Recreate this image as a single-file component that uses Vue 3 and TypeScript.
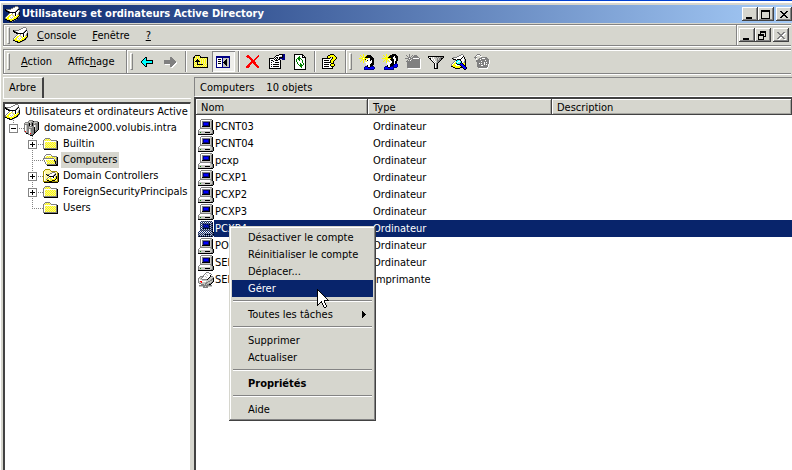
<script setup lang="ts">
import { h, ref } from 'vue'

const palette: Record<string, string> = {
  K: '#000000', W: '#ffffff', G: '#808080', L: '#c6c6c0', D: '#4a4a4a',
  Y: '#ffff00', y: '#f4ee9c', O: '#a09000', B: '#0000ff', N: '#000084',
  C: '#00ffff', R: '#ff0000', g: '#008000', c: '#84e0e8', o: '#fff7a0',
}

const icons: Record<string, string[]> = {
  computer: [
    '...GGGGGGGGGGG..', '..GWWWWWWWWWLLK.', '..GWGGGGGGGGLGK.', '..GWGNNNNNNKLGK.',
    '..GWGNBBBBNKLGK.', '..GWGNBBBBNKLGK.', '..GWGNNNNNNKLGK.', '..GWKKKKKKKKLGK.',
    '..GLLLLLLLLLLGK.', '..GGGGGGGGGGGGK.', '.GWWWWWWWWWWLGK.', 'GWWWWWWWWWWWLLGK',
    'GLLLLLLLLLLLLLGK', 'GLgLLLLKKKKKLLGK', 'GLLLLLLLLLLLLGGK', 'KKKKKKKKKKKKKKK.',
  ],
  printer: [
    '........GGG.....', '.......GWWWGG...', '......GWLWWWWG..', '.....GWWWLWWK...',
    '..GGGGWLWWWWKGG.', '.GLLGWWWLWWKLLLG', 'GLLGWWWWWWKLLLGK', 'GWLLGGGGGKLLLGGK',
    'GWWWLLLLLLLLGGLK', 'GLRRWWWWLLGGLLGK', 'GLLRLLLLGGLLLGK.', '.GGLLLLGGLLGGK..',
    '...GGGLGLGGKK...', '.GGGGGGGGGGGGG..', '.LLLLGGLGGLLLL..', '.....GGGGG......',
  ],
  directory: [
    '..........GGG...', '........GGWWWG..', '......GGWWWWWG..', 'KGGGGGWWWWWWGK..',
    'KKGWWWWWWWWGKWG.', '.KKKGWWWWWGKWWG.', '...KKKKKKKKWWLK.', '....GWWGWWKWWGK.',
    '...GWWYLWWKWLGK.', '..GWYYWLYWKWYYK.', '.GWYYWWWLYWYYKG.', 'GWYYWLWLWYYYKG..',
    'GYYYWWLWYYYKK...', 'KKYYYYYYYKKG....', '..KKKYYKKG......', '....KKKG........',
  ],
  domain: [
    '.....GGGG.......', '....GLLLGKGGGG..', '.GGGGLLGGGLLLGK.', 'GLLLGKLGKGLGGGK.',
    'GGGGGKGGKGGGGGK.', 'GWLGGKWGKGWLGGK.', 'GWLGGGGGGGWLGGK.', 'GWLGGLLLGGKLGGK.',
    'GWLGGGGGGGKLGGK.', 'GWLGGWLGGGKLGGK.', 'GWLGGWLGGGKGGK..', 'GRLGGWLGGGKGK...',
    '.GGGGWLGGGKK....', '..KKGWRGGGK.....', '....GGGGGK......', '......KKK.......',
  ],
  folder: [
    '................', '................', '..GGGGG.........', '.GyYyYyG........',
    'GyYyYyYyGGGGGG..', 'GWWWWWWWWWWWWGK.', 'GWyYyYyYyYyYyGK.', 'GWYyYyYyYyYyYGK.',
    'GWyYyYyYyYyYyGK.', 'GWYyYyYyYyYyYGK.', 'GWyYyYyYyYyYyGK.', 'GWYyYyYyYyYyYGK.',
    'GGGGGGGGGGGGGGK.', '.KKKKKKKKKKKKKK.', '................', '................',
  ],
  folderOpen: [
    '................', '................', '...GGGGG........', '..GWWWWWG.......',
    '.GWyYyYyYGGGGG..', '.GyYyYyYyYyYyGK.', 'GGGGGGGGGGGyYGK.', 'GWWWWWWWWWWGyGK.',
    '.GWYyYyYyYyKYGK.', '.GWyYyYyYyYGKGK.', '..GWyYyYyYyYKGK.', '..GWYyYyYyYyKGK.',
    '...GGGGGGGGGGKK.', '....KKKKKKKKKKK.', '................', '................',
  ],
  folderUnit: [
    '................', '..OOOOO.........', '.OoooooO........', 'OoooooooOOOOOO..',
    'OWoooooooGGGooO.', 'OWoooooGGWWWGoOK', 'OWoKGGGWWWWGKoOK', 'OWooKKWWWWGKLoOK',
    'OWooooKKKKKWLKOK', 'OWoooGWYWWKWYKOK', 'OWooGWYYLWWYYKOK', 'OWoGYYWLYYYYKoOK',
    'OWooKKYYYKKKooOK', 'OOOOOOKKKOOOOOOK', '.KKKKKKKKKKKKKK.', '................',
  ],
  back: [
    '................', '................', '................', '.....KK.........',
    '....KCK.........', '...KCCK.........', '..KCCCKKKKKKK...', '.KCCCCCCCCCCK...',
    '.KCCCCCCCCCCK...', '..KCCCKKKKKKK...', '...KCCK.........', '....KCK.........',
    '.....KK.........', '................', '................', '................',
  ],
  forward: [
    '................', '................', '................', '.......GG.......',
    '.......GGG......', '.......GGGG.....', '.GGGGGGGGGGG....', '.GGGGGGGGGGGG...',
    '.GGGGGGGGGGGGW..', '.GGGGGGGGGGGWW..', '..WWWWWGGGGWW...', '.......GGGWW....',
    '.......GGWW.....', '........WW......', '................', '................',
  ],
  up: [
    '................', '..KKKKK.........', '.KyYyYyK........', 'KKyYyYyKKKKKKKK.',
    'KYyYyYyYyYyYyYK.', 'KyYyKyYyYyYyYyK.', 'KYyKKKYyYyYyYyK.', 'KyKKKKKyYyYyYyK.',
    'KYyYKyYyYyYyYyK.', 'KyYyKyYyYyYyYyK.', 'KYyYKKKKKKyYyYK.', 'KyYyYyYyYyYyYyK.',
    'KYyYyYyYyYyYyYK.', 'KKKKKKKKKKKKKKK.', '................', '................',
  ],
  panes: [
    '................', '................', 'NNNNNNNNNNNNNN..', 'NNNNNNNNNNNNNN..',
    'NWWWWWNLLLLLLN..', 'NWKKKWNLLLKLLN..', 'NWWWWWNLLKKLLN..', 'NWKKKWNLKKKLLN..',
    'NWWWWWNKKKKLLN..', 'NWKKKWNLKKKLLN..', 'NWWWWWNLLKKLLN..', 'NWWWWWNLLLKLLN..',
    'NWWWWWNLLLLLLN..', 'NNNNNNNNNNNNNN..', '................', '................',
  ],
  remove: [
    '................', '.RR.........R...', 'RRRR.......RR...', '.RRRR.....RR....',
    '...RRR...RR.....', '....RRR.RR......', '.....RRRR.......', '.....RRRR.......',
    '....RRRRRR......', '...RRR.RRR......', '..RRR...RRR.....', '.RRR.....RRR....',
    'RRRR......RRR...', 'RRR........RR...', '................', '................',
  ],
  properties: [
    '..........KKKKNN', '.......KKKWWWKNN', '......KWWWWLLKNN', '.....KWKKWKKKKNN',
    'KKKKKWKWKWKNNNNN', 'KWWWWKWKWKK..NNN', 'KWKKWWKKKWWK....', 'KWWWKWWWWWWK....',
    'KWKWWWKKKKWK....', 'KWWWWWWWWWWK....', 'KWKWKKKKKKWK....', 'KWWWWWWWWWWK....',
    'KWKWKKKKKKWK....', 'KWWWWWWWWWWK....', 'KKKKKKKKKKKK....', '................',
  ],
  refresh: [
    '..KKKKKKKKK.....', '..KWWWWWWWKK....', '..KWWWWgWWKWK...', '..KWWWggWWKKKK..',
    '..KWWggggWWWWK..', '..KWgWggWgWWWK..', '..KWgWWgWWgWWK..', '..KWgWWWWWgWWK..',
    '..KWWgWWWWgWWK..', '..KWWgWWgWWgWK..', '..KWWWgWggWgWK..', '..KWWWWggggWWK..',
    '..KWWWWWggWWWK..', '..KWWWWWWgWWWK..', '..KWWWWWWWWWWK..', '..KKKKKKKKKKKK..',
  ],
  help: [
    '........KKKK....', '......KKYYYYK...', '.....KYYYYYYYK..', '.....KYYK.KYYYK.',
    'KKKKKKKK..KYYYK.', 'KWWWWWWWWKYYYK..', 'KWKKKKKWKYYYK...', 'KWWWWWWWKYYK....',
    'KWKKKKKKKYYK....', 'KWWWWWWWWKKK....', 'KWKKKKKWKYYYK...', 'KWWWWWWWKYYYK...',
    'KWKKKKKWWKKK....', 'KWWWWWWWWWK.....', 'KKKKKKKKKKK.....', '................',
  ],
  user: [
    '....Y...........', '.Y..Y..YKKKK....', '..Y.Y.YKKKKKK...', '...YYYKKKKKKKK..',
    'YYYYWYYYYWWKKKK.', '...YYYKWWWWKKKK.', '..Y.Y.YWKWWKWKK.', '.Y..Y..YWWWWWKK.',
    '....Y.WWWWWWWKK.', '.......WWWWWKKK.', '.......WWWWKKKK.', '........KWWKKK..',
    '......NNKWWKNNN.', '.....NBBBKKBBBBN', '.....NBBBBBBBBBN', '.....NNNNNNNNNN.',
  ],
  group: [
    '....Y.....KKKK..', '.Y..Y..YKKKKKKK.', '..Y.Y.YKKKKKWKKK', '...YYYKKKKKWWKKK',
    'YYYYYYYYYKKWWWKK', '...YYYWWKKKKWWKK', '..Y.Y.YWWKKKWWKK', '.Y..Y..YWWKKWKK.',
    '....YWWWWWKKWKK.', '.....WWWWKKKWKN.', '.....WWWKKKKNBBN', '.....KWWKKKNBBBN',
    '...NNKWWKNNNBBBN', '..NBBBKKBBBNNNN.', '..NBBBBBBBBN....', '..NNNNNNNNNN....',
  ],
  unitOff: [
    '....G...........', '.G..G..G.GGG....', '..G.G.G.GGGGG...', '...GGG.GGGGGGG..',
    'GGGGWGGGWWWWWWG.', '...GGG.GGGGGGGGW', '..G.GWGGGGGGGGGW', '.GGGGGGGGGGGGGGW',
    '..GGGGGGGGGGGGGW', '..GGGGGGGGGGGGGW', '..GGGGGGGGGGGGGW', '..GGGGGGGGGGGGGW',
    '..GGGGGGGGGGGGGW', '..GGGGGGGGGGGGGW', '...WWWWWWWWWWWWW', '................',
  ],
  filter: [
    '................', '................', 'KKKKKKKKKKKKKKKK', 'KWLWLWLLGLGLGGGK',
    '.KKWLWLLLGLGGKK.', '..KWWLWLLGLGGK..', '...KWLWLLGGGK...', '....KWLWLGGK....',
    '.....KWLLGK.....', '......KWGK......', '......KWGK......', '......KWGK......',
    '......KWGK......', '......KWGK......', '......KKKK......', '................',
  ],
  find: [
    '..........GG....', '........GGWWG...', '......GGWWWWK...', '..GGGGWWWWWKWK..',
    '.KGWWWWWWWKWWK..', '..KKKWKKKKWWWLK.', '....GKCCcKWWWLK.', '...GWCCWWcKWWGK.',
    '..GWYCWccCKWLGK.', '.GWYYKCCCKBKYYK.', 'GWYYWWKKKBBBKYK.', 'GYYYYWWWLKBBBKK.',
    'KKYYYYYYYYKBBBK.', '..KKYYYYYKKKBBBK', '....KKKKK...KBBK', '.............KK.',
  ],
  historyOff: [
    '...GGG..........', '..GWWWG.........', '.GW...WW........', 'GGG....GGGGGG...',
    '.GW..GGGWWWGGG..', '..W.GGWGGGGGGGG.', '..GGGGGGGGGWGGGW', '..GGGGGWGGGGGGGW',
    '...GGGGGGGWGWGGW', '...GGWGWGGWGGGGW', '...GGGGGGGWGWGW.', '...GGGGWWGGGGGW.',
    '...GGGGGGGGGGGW.', '....GGGGGGGGGW..', '.....WWWWWWWWW..', '................',
  ],
  minimize: ['..........', '..........', '..........', '..........', '..........', '..........', '..........', '.KKKKKK...', '.KKKKKK...'],
  maximize: ['KKKKKKKKK.', 'KKKKKKKKK.', 'K.......K.', 'K.......K.', 'K.......K.', 'K.......K.', 'K.......K.', 'K.......K.', 'KKKKKKKKK.'],
  restore: ['..KKKKKK..', '..KKKKKK..', '..K....K..', 'KKKKKK.K..', 'KKKKKK.K..', 'K....KKK..', 'K....K....', 'K....K....', 'KKKKKK....'],
  close: ['..........', '.KK....KK.', '..KK..KK..', '...KKKK...', '....KK....', '...KKKK...', '..KK..KK..', '.KK....KK.', '..........'],
  closeOff: ['..........', '.GG....GG.', '..GG..GGWW', '...GGGGWW.', '....GGWW..', '...GGGG...', '..GGWWGG..', '.GGWW..GG.', '..WW....WW'],
  submenu: ['K...', 'KK..', 'KKK.', 'KKKK', 'KKK.', 'KK..', 'K...'],
  pointer: [
    'K...........', 'KK..........', 'KWK.........', 'KWWK........', 'KWWWK.......', 'KWWWWK......',
    'KWWWWWK.....', 'KWWWWWWK....', 'KWWWWWWWK...', 'KWWWWWWWWK..', 'KWWWWWWWWWK.', 'KWWWWWWKKKKK',
    'KWWWKWWK....', 'KWWKKWWK....', 'KWK..KWWK...', 'KK...KWWK...', 'K.....KWWK..', '......KWWK..', '.......KK...',
  ],
}

// Turns a character grid into one path per colour; tinted icons get a navy checkerboard.
function PixelIcon(props: { name: string; tinted?: boolean }) {
  const rows = icons[props.name]
  const paths: Record<string, string> = {}
  rows.forEach((row, y) => {
    for (let x = 0; x < row.length; x++) {
      if (row[x] === '.') continue
      const fill = props.tinted && (x + y) % 2 ? '#0a246a' : palette[row[x]]
      paths[fill] = (paths[fill] ?? '') + `M${x} ${y}h1v1h-1z`
    }
  })
  return h(
    'svg',
    {
      width: rows[0].length, height: rows.length,
      viewBox: `0 0 ${rows[0].length} ${rows.length}`,
      'shape-rendering': 'crispEdges', 'aria-hidden': 'true',
    },
    Object.entries(paths).map(([fill, d]) => h('path', { fill, d })),
  )
}
PixelIcon.props = { name: String, tinted: Boolean }

interface Tool { icon: string; label: string; disabled?: boolean; pressed?: boolean }
const navTools: Tool[][] = [
  [{ icon: 'back', label: 'Précédent' }, { icon: 'forward', label: 'Suivant', disabled: true }],
  [{ icon: 'up', label: 'Dossier parent' }, { icon: 'panes', label: 'Arborescence', pressed: true }],
  [{ icon: 'remove', label: 'Supprimer' }, { icon: 'properties', label: 'Propriétés' }, { icon: 'refresh', label: 'Actualiser' }],
  [{ icon: 'help', label: 'Aide' }],
]
const objectTools: Tool[] = [
  { icon: 'user', label: 'Nouvel utilisateur' }, { icon: 'group', label: 'Nouveau groupe' },
  { icon: 'unitOff', label: 'Nouvelle unité', disabled: true }, { icon: 'filter', label: 'Filtre' },
  { icon: 'find', label: 'Rechercher' }, { icon: 'historyOff', label: 'Ajouter au groupe', disabled: true },
]

interface Node { label: string; icon: string; level: number; sign?: string; last?: boolean }
const nodes: Node[] = [
  { label: 'Utilisateurs et ordinateurs Active Directory', icon: 'directory', level: 0 },
  { label: 'domaine2000.volubis.intra', icon: 'domain', level: 1, sign: '−', last: true },
  { label: 'Builtin', icon: 'folder', level: 2, sign: '+' },
  { label: 'Computers', icon: 'folderOpen', level: 2 },
  { label: 'Domain Controllers', icon: 'folderUnit', level: 2, sign: '+' },
  { label: 'ForeignSecurityPrincipals', icon: 'folder', level: 2, sign: '+' },
  { label: 'Users', icon: 'folder', level: 2, last: true },
]
const current = ref('Computers')

const objects = ['PCNT03', 'PCNT04', 'pcxp', 'PCXP1', 'PCXP2', 'PCXP3', 'PCXP4', 'PORTABLE', 'SERVEUR', 'SERVEUR-HP']
  .map((name, i) => ({ name, printer: i === 9 }))
const selected = ref('PCXP4')

interface Entry { label: string; more?: boolean; strong?: boolean }
const menu: Entry[][] = [
  [{ label: 'Désactiver le compte' }, { label: 'Réinitialiser le compte' }, { label: 'Déplacer...' }, { label: 'Gérer' }],
  [{ label: 'Toutes les tâches', more: true }],
  [{ label: 'Supprimer' }, { label: 'Actualiser' }],
  [{ label: 'Propriétés', strong: true }],
  [{ label: 'Aide' }],
]
const active = ref('Gérer')
</script>

<template>
  <div class="window">
    <header class="title">
      <PixelIcon name="directory" />
      <h1>Utilisateurs et ordinateurs Active Directory</h1>
      <div class="controls">
        <button aria-label="Réduire"><PixelIcon name="minimize" /></button>
        <button aria-label="Agrandir"><PixelIcon name="maximize" /></button>
        <button class="apart" aria-label="Fermer"><PixelIcon name="close" /></button>
      </div>
    </header>

    <nav class="bar menubar">
      <i class="grip"></i>
      <PixelIcon name="directory" />
      <button class="word"><u>C</u>onsole</button>
      <button class="word"><u>F</u>enêtre</button>
      <button class="word"><u>?</u></button>
      <div class="controls child">
        <button aria-label="Réduire la console"><PixelIcon name="minimize" /></button>
        <button aria-label="Restaurer la console"><PixelIcon name="restore" /></button>
        <button class="apart" aria-label="Fermer la console" disabled><PixelIcon name="closeOff" /></button>
      </div>
    </nav>

    <div class="bar toolbar">
      <div class="band words">
        <i class="grip"></i>
        <button class="word"><u>A</u>ction</button>
        <button class="word">Affic<u>h</u>age</button>
      </div>
      <div class="band">
        <i class="grip"></i>
        <div v-for="(group, g) in navTools" :key="g" class="tools">
          <button
            v-for="tool in group" :key="tool.icon" class="tool" :class="{ pressed: tool.pressed }"
            :aria-label="tool.label" :disabled="tool.disabled"
          ><PixelIcon :name="tool.icon" /></button>
        </div>
      </div>
      <div class="band">
        <i class="grip"></i>
        <div class="tools">
          <button
            v-for="tool in objectTools" :key="tool.icon" class="tool"
            :aria-label="tool.label" :disabled="tool.disabled"
          ><PixelIcon :name="tool.icon" /></button>
        </div>
      </div>
    </div>

    <main class="panes">
      <section class="side">
        <div class="tabs"><button class="tab">Arbre</button></div>
        <ul class="tree">
          <li v-for="node in nodes" :key="node.label" class="node">
            <span v-if="node.level === 2" class="indent"></span>
            <span v-if="node.level > 0" class="guide" :class="{ last: node.last }">
              <button v-if="node.sign" class="sign" :class="{ plus: node.sign === '+' }" :aria-label="node.label"></button>
            </span>
            <PixelIcon :name="node.icon" />
            <button class="label" :class="{ current: current === node.label }" @click="current = node.label">{{ node.label }}</button>
          </li>
        </ul>
      </section>

      <section class="content">
        <div class="summary"><span>Computers</span><span>10 objets</span></div>
        <div class="list">
          <table>
            <thead>
              <tr><th class="name">Nom</th><th class="type">Type</th><th>Description</th></tr>
            </thead>
            <tbody>
              <tr v-for="item in objects" :key="item.name" :class="{ selected: selected === item.name }" @click="selected = item.name">
                <td class="object">
                  <div class="cell">
                    <PixelIcon :name="item.printer ? 'printer' : 'computer'" :tinted="selected === item.name" />
                    <span>{{ item.name }}</span>
                  </div>
                </td>
                <td>{{ item.printer ? 'Imprimante' : 'Ordinateur' }}</td>
                <td></td>
              </tr>
            </tbody>
          </table>
        </div>
      </section>
    </main>

    <div class="context" role="menu">
      <div v-for="(group, g) in menu" :key="g" class="group">
        <button
          v-for="entry in group" :key="entry.label" class="entry" role="menuitem"
          :class="{ active: active === entry.label, strong: entry.strong }" @mouseenter="active = entry.label"
        >
          <span>{{ entry.label }}</span>
          <PixelIcon v-if="entry.more" name="submenu" />
        </button>
      </div>
      <div class="pointer"><PixelIcon name="pointer" /></div>
    </div>
  </div>
</template>

<style>
body { margin: 0; background: #d6d6ce; }
</style>

<style scoped>
.window {
  position: relative;
  display: flex;
  flex-direction: column;
  box-sizing: border-box;
  height: 100vh;
  padding: 4px 0 0 3px;
  overflow: hidden;
  border-top: 1px solid #0040d0;
  box-shadow: inset 1px 2px #fff;
  background: #d6d6ce;
  color: #000;
  font: 11px/16px "DejaVu Sans Condensed", "DejaVu Sans", sans-serif;
}
button { padding: 0; border: 0; background: none; color: inherit; font: inherit; text-align: left; }
svg { display: block; flex: none; }
h1, ul { margin: 0; padding: 0; }

.title {
  display: flex;
  align-items: center;
  height: 18px;
  gap: 1px;
  padding-left: 2px;
  background: linear-gradient(90deg, #08246b, #a5cbf7);
  color: #fff;
}
.title h1 { font-size: 11px; font-weight: bold; white-space: nowrap; }

.controls { display: flex; margin-left: auto; }
.controls button {
  display: flex;
  align-items: center;
  justify-content: center;
  width: 16px;
  height: 14px;
  background: #d6d6ce;
  box-shadow: inset -1px -1px #424242, inset 1px 1px #fff, inset -2px -2px #848484;
}
.controls .apart { margin-left: 2px; }
.child { align-self: stretch; align-items: center; padding: 0 2px; border-left: 1px solid #848484; box-shadow: inset 1px 0 #fff; }

.bar {
  display: flex;
  align-items: center;
  margin-right: 1px;
  border: 1px solid #848484;
  border-right: 0;
  box-shadow: inset 1px 1px #fff, 0 1px #fff;
}
.menubar { height: 20px; margin-top: 1px; }
.menubar .word { padding-top: 2px; }
.toolbar { height: 23px; margin-top: 3px; }
.grip { flex: none; width: 1px; height: 15px; margin: 0 3px; border: 1px solid; border-color: #fff #848484 #848484 #fff; }
.word { margin-left: 8px; }
.word + .word { margin-left: 16px; }
.band { display: flex; align-items: center; height: 23px; }
.band + .band { border-left: 1px solid #848484; box-shadow: inset 1px 0 #fff; }
.words { width: 122px; }
.tools { display: flex; }
.tools + .tools { margin-left: 3px; padding-left: 3px; border-left: 1px solid #848484; box-shadow: inset 1px 0 #fff; }
.tools:last-child { margin-right: 4px; }
.tool { display: flex; align-items: center; justify-content: center; width: 23px; height: 21px; }
.pressed { background: #eeeeea; box-shadow: inset 1px 1px #848484, inset -1px -1px #fff; }

.panes { display: grid; grid-template-columns: 188px 1fr; column-gap: 3px; flex: 1; min-height: 0; margin-top: 3px; }
.side, .content { display: flex; flex-direction: column; min-width: 0; min-height: 0; }
.tabs { display: flex; height: 21px; border-bottom: 1px solid #fff; }
.tab { width: 41px; padding-left: 5px; border: 1px solid #fff; border-right: 2px solid #424242; border-bottom: 0; }
.tree {
  flex: 1;
  overflow: hidden;
  margin-top: 3px;
  border-style: solid;
  border-width: 2px 1px 0 2px;
  border-color: #424242 #d6d6ce #d6d6ce #424242;
  background: #fff;
  list-style: none;
}
.node { display: flex; align-items: center; height: 16px; }
.indent, .guide { flex: none; width: 19px; height: 16px; }
.guide {
  box-sizing: border-box;
  padding: 4px;
  background:
    repeating-linear-gradient(#848484 0 1px, #fff 1px 2px) 8px 0 / 1px 16px no-repeat,
    repeating-linear-gradient(90deg, #848484 0 1px, #fff 1px 2px) 8px 8px / 11px 1px no-repeat;
}
.guide.last { background-size: 1px 8px, 11px 1px; }
.sign {
  display: block;
  box-sizing: border-box;
  width: 9px;
  height: 9px;
  border: 1px solid #848484;
  background: linear-gradient(#000, #000) center / 5px 1px no-repeat, #fff;
}
.sign.plus {
  background:
    linear-gradient(#000, #000) center / 5px 1px no-repeat,
    linear-gradient(#000, #000) center / 1px 5px no-repeat, #fff;
}
.label { margin-left: 2px; padding: 0 2px; white-space: nowrap; }
.label.current { background: #d6d6ce; }

.summary { display: flex; gap: 12px; height: 18px; padding-left: 5px; border: 1px solid #848484; border-right: 0; border-bottom-color: #fff; line-height: 19px; }
.list { flex: 1; overflow: hidden; border-top: 2px solid #424242; border-left: 2px solid #424242; background: #fff; }
table { width: 100%; table-layout: fixed; border-spacing: 0; }
th {
  box-sizing: border-box;
  height: 16px;
  padding: 0 5px;
  background: #d6d6ce;
  box-shadow: inset -1px -1px #424242, inset 1px 1px #fff, inset -2px -2px #a5a5a0;
  font-weight: normal;
  line-height: 15px;
  text-align: left;
}
.name { width: 172px; }
.type { width: 184px; }
tbody::before { content: ""; display: block; height: 3px; }
td { height: 17px; padding: 0 5px; line-height: 17px; }
.object { padding: 0 0 0 2px; }
.cell { display: flex; align-items: center; height: 17px; }
.cell span { flex: 1; padding-left: 1px; }
.selected td:not(.object), .selected .cell span { background: #08246b; color: #fff; }

.context {
  position: absolute;
  left: 229px;
  top: 225px;
  box-sizing: border-box;
  width: 147px;
  padding: 3px;
  background: #d6d6ce;
  box-shadow: inset -1px -1px #424242, inset 1px 1px #d6d6ce, inset -2px -2px #848484, inset 2px 2px #fff;
}
.group + .group::before { content: ""; display: block; height: 1px; margin: 3px 1px 4px; border-top: 1px solid #848484; background: #fff; }
.entry { display: flex; align-items: center; justify-content: space-between; width: 100%; height: 17px; padding: 0 7px 0 16px; }
.entry.active { background: #08246b; color: #fff; }
.entry.strong { font-weight: bold; }
.pointer { position: absolute; left: 88px; top: 63px; }
</style>
